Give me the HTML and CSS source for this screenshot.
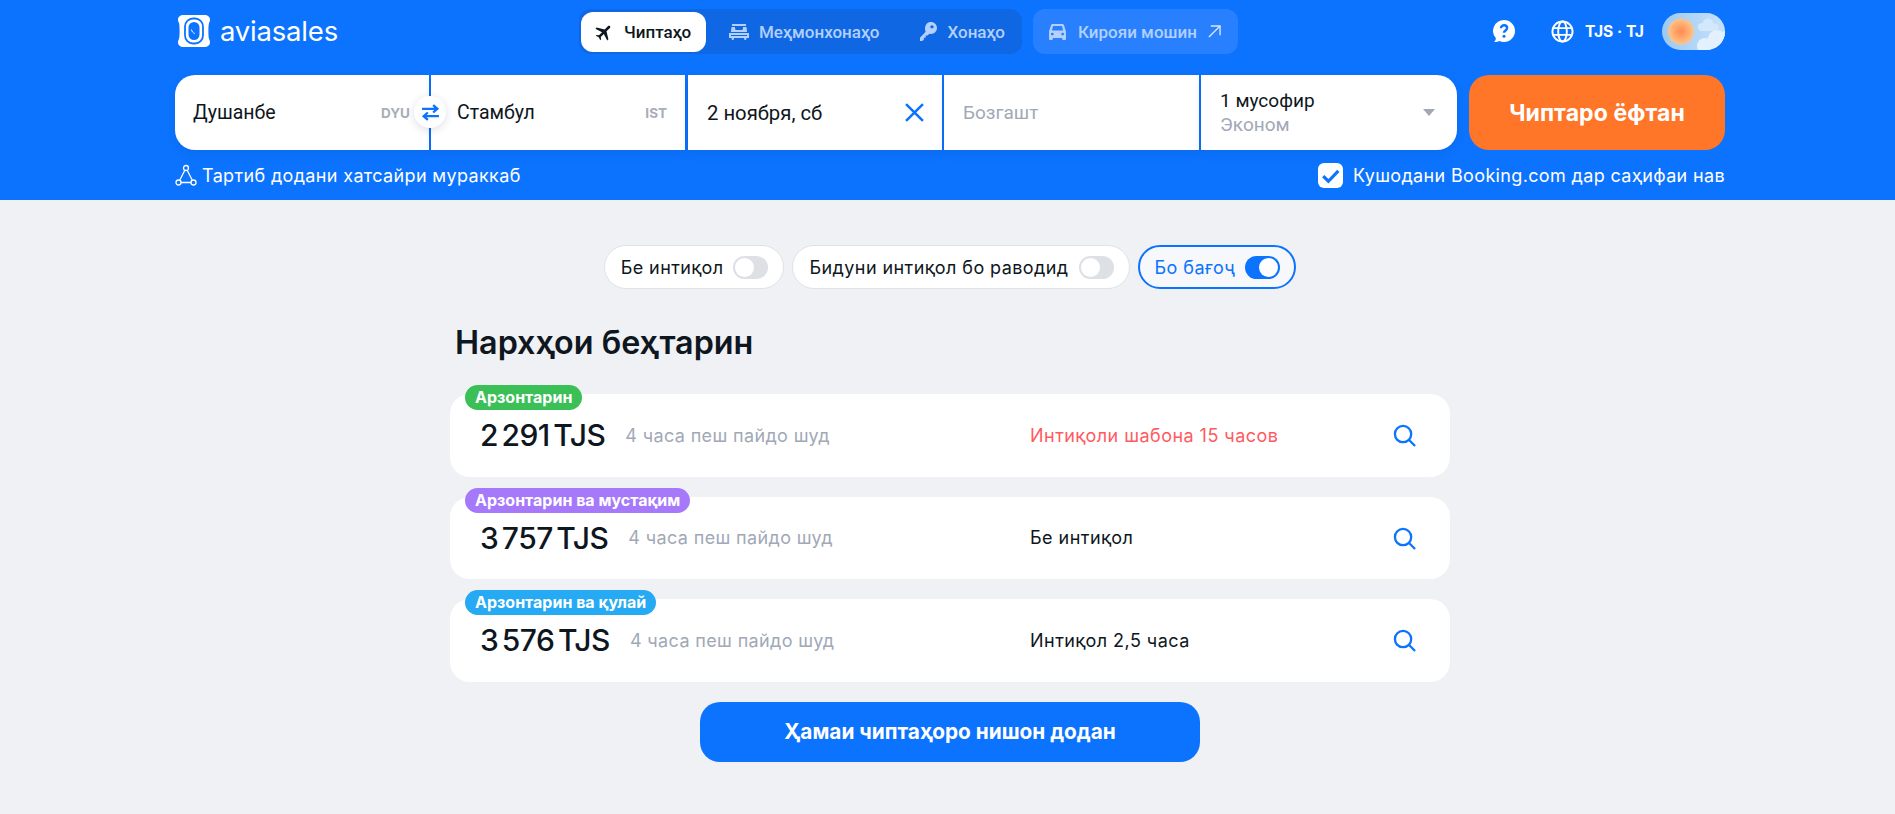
FILE: index.html
```html
<!DOCTYPE html>
<html lang="tg">
<head>
<meta charset="utf-8">
<title>Aviasales</title>
<link rel="stylesheet" href="styles.css">
</head>
<body>
<header class="header">
  <div class="top">
    <a class="logo">
      <svg class="logo-mark" viewBox="0 0 34 34" width="34" height="34">
        <path fill="#fff" d="M6 1h22c2.800 0 5 2.200 5 4.500 0 1.500-.4 2.300-.8 3C31.600 10 31.400 13 31.400 17s.2 7 .8 8.500c.4.700.8 1.500.8 3 0 2.300-2.200 4.500-5 4.500H6c-2.800 0-5-2.200-5-4.500 0-1.500.4-2.300.8-3C2.400 24 2.600 21 2.600 17s-.2-7-.8-8.500C1.400 7.800 1 7 1 5.500 1 3.200 3.200 1 6 1z"/>
        <rect x="8" y="4.500" width="18" height="25" rx="8" fill="none" stroke="#0c73fe" stroke-width="1.800"/>
        <rect x="11.500" y="8" width="11" height="18" rx="5.500" fill="#0c73fe"/>
        <path d="M14.500 15.500c.3 2 1.500 3.300 3.200 4" fill="none" stroke="#fff" stroke-width="1"/>
      </svg>
      <span class="logo-text">aviasales</span>
    </a>
    <nav class="segment">
      <a class="tab tab-active">
        <svg class="ic-plane" viewBox="0 0 24 24"><path transform="rotate(45 12 12)" fill="#0e1620" d="M22 16.500v-2l-8.500-5.200V3.500c0-.9-.7-1.600-1.500-1.600s-1.500.7-1.500 1.600v5.800L2 14.500v2l8.500-2.700V19l-2.300 1.700V22l3.800-1 3.800 1v-1.300L13.500 19v-5.200z"/></svg>
        <span>Чиптаҳо</span>
      </a>
      <a class="tab tab-hotel">
        <svg class="ic-bed" viewBox="0 0 20 16"><path fill="#b3d0ff" d="M3 0h14v2H3zM2.500 3h3.300l.7 3h7l.7-3h3.300l.6 5H1.900zM0 9h20v5h-2.500l-.5 2h-1.500l-.5-2H5l-.5 2H3l-.5-2H0zm2 2v1h16v-1z"/></svg>
        <span>Меҳмонхонаҳо</span>
      </a>
      <a class="tab tab-home">
        <svg class="ic-key" viewBox="0 0 18 20"><path fill="#b3d0ff" d="M11.500 0C15 0 18 2.800 18 6.300s-3 6.300-6.500 6.300c-.6 0-1.200-.1-1.700-.2L8 14.300H6v2.200H4V19l-2 1H0v-3.500l6-6.300c-.5-.9-.7-2-.7-3C5.300 2.800 8 0 11.500 0zm1.200 3.300a1.800 1.800 0 1 0 0 3.600 1.800 1.800 0 0 0 0-3.600z"/></svg>
        <span>Хонаҳо</span>
      </a>
    </nav>
    <a class="car">
      <svg class="ic-car" viewBox="0 0 18 17"><path fill="#b3d0ff" d="M4 0h10c1 0 1.700.6 2 1.500L18 8v8c0 .6-.4 1-1 1h-2c-.6 0-1-.4-1-1v-1H4v1c0 .6-.4 1-1 1H1c-.6 0-1-.4-1-1V8l2-6.500C2.300.6 3 0 4 0zm.3 2L3 7h12l-1.300-5zM3.500 9.200a1.500 1.500 0 1 0 0 3 1.500 1.500 0 0 0 0-3zm11 0a1.500 1.500 0 1 0 0 3 1.500 1.500 0 0 0 0-3z"/></svg>
      <span>Кирояи мошин</span>
      <svg class="ic-out" viewBox="0 0 14 14"><path d="M1 13 13 1M3 1h10v10" fill="none" stroke="#d6e6ff" stroke-width="1.500"/></svg>
    </a>
    <div class="tools">
      <svg class="ic-help" viewBox="0 0 22 22"><path fill="#fff" d="M11 0a11 11 0 0 1 0 22c-1.700 0-3.300-.4-4.700-1.100-1.300.9-3.300 1.200-5.300 1.100 1.200-1 1.800-2.200 1.900-3.700A11 11 0 0 1 11 0z"/><path d="M8 8.300c0-1.900 1.400-3 3.100-3s3 1.100 3 2.800c0 2.400-3.100 2.400-3.100 4.700" fill="none" stroke="#0c73fe" stroke-width="2.400"/><circle cx="11" cy="16.300" r="1.500" fill="#0c73fe"/></svg>
      <svg class="ic-globe" viewBox="0 0 24 24"><g fill="none" stroke="#fff" stroke-width="2"><circle cx="12" cy="12" r="10.500"/><ellipse cx="12" cy="12" rx="4.500" ry="10.500"/><path d="M2 8.500h20M2 15.500h20"/></g></svg>
      <span class="locale">TJS · TJ</span>
      <svg class="theme" viewBox="0 0 63 37">
        <defs>
          <clipPath id="themeclip"><rect width="63" height="37" rx="18.500"/></clipPath>
          <linearGradient id="sky" x1="0" x2="1" y1="0" y2="0"><stop offset="0" stop-color="#9cc9f2"/><stop offset="1" stop-color="#c6e2fb"/></linearGradient>
          <radialGradient id="sun"><stop offset="0" stop-color="#ff8a4f"/><stop offset="1" stop-color="#fdc58b"/></radialGradient>
        </defs>
        <g clip-path="url(#themeclip)">
          <rect width="63" height="37" fill="url(#sky)"/>
          <g fill="#d3e8fb"><circle cx="40" cy="14" r="4"/><circle cx="46" cy="11" r="5.500"/><circle cx="53" cy="14" r="3.500"/><rect x="38" y="13" width="17" height="5" rx="2.500"/></g>
          <g fill="#e3f1fe"><circle cx="43" cy="33" r="8"/><circle cx="55" cy="26" r="9"/><circle cx="64" cy="25" r="7"/><rect x="38" y="30" width="28" height="10"/></g>
          <circle cx="19" cy="18.500" r="13" fill="url(#sun)"/>
        </g>
      </svg>
    </div>
  </div>

  <form class="search">
    <div class="form">
      <div class="field field-origin"><span class="value value-city">Душанбе</span><span class="iata">DYU</span></div>
      <div class="field field-dest"><span class="value value-city">Стамбул</span><span class="iata">IST</span></div>
      <div class="field field-date"><span class="value value-date">2 ноября, сб</span>
        <svg class="ic-x" viewBox="0 0 18 18"><path d="M1 1l16 16M17 1 1 17" fill="none" stroke="#0c73fe" stroke-width="2.400"/></svg>
      </div>
      <div class="field field-back"><span class="value muted">Бозгашт</span></div>
      <div class="field field-pass">
        <div class="pass"><span class="value">1 мусофир</span><span class="value muted">Эконом</span></div>
        <span class="caret"></span>
      </div>
      <button type="button" class="swap">
        <svg viewBox="0 0 18 16" width="19" height="17"><path d="M1 4.500h14M11.500 1 15.500 4.500 11.500 8M17 11.500H3M6.500 8l-4 3.500 4 3.500" fill="none" stroke="#0c73fe" stroke-width="2.200"/></svg>
      </button>
    </div>
    <button type="button" class="find">Чиптаро ёфтан</button>
  </form>

  <div class="under">
    <a class="complex">
      <svg class="ic-route" viewBox="0 0 22 22"><g fill="none" stroke="#fff" stroke-width="1.300"><circle cx="11" cy="4" r="2.500"/><circle cx="3.500" cy="18.500" r="2.500"/><circle cx="18.500" cy="18.500" r="2.500"/><path d="M9.800 6.200 4.700 16.300M12.200 6.200l5.100 10.100M6 18.500h10"/></g></svg>
      <span>Тартиб додани хатсайри мураккаб</span>
    </a>
    <label class="booking">
      <span class="check"><svg viewBox="0 0 24 24" width="25" height="25"><path d="M5 12.500l5 5L19.500 7.500" fill="none" stroke="#0c73fe" stroke-width="3"/></svg></span>
      <span>Кушодани Booking.com дар саҳифаи нав</span>
    </label>
  </div>
</header>

<main class="main">
  <div class="filters">
    <div class="pill"><span>Бе интиқол</span><span class="toggle"></span></div>
    <div class="pill"><span>Бидуни интиқол бо раводид</span><span class="toggle"></span></div>
    <div class="pill pill-on"><span>Бо бағоҷ</span><span class="toggle toggle-on"></span></div>
  </div>
  <h1 class="title">Нархҳои беҳтарин</h1>
  <div class="cards">
    <article class="card">
      <span class="tag tag-green">Арзонтарин</span>
      <div class="price-wrap"><span class="price">2 291 TJS</span><span class="age">4 часа пеш пайдо шуд</span></div>
      <span class="stops stops-red">Интиқоли шабона 15 часов</span>
      <svg class="ic-search" viewBox="0 0 24 24"><g fill="none" stroke="#0c73fe" stroke-width="2.400"><circle cx="10.500" cy="10.500" r="8.500"/><path d="m17 17 6 6"/></g></svg>
    </article>
    <article class="card">
      <span class="tag tag-purple">Арзонтарин ва мустақим</span>
      <div class="price-wrap"><span class="price">3 757 TJS</span><span class="age">4 часа пеш пайдо шуд</span></div>
      <span class="stops">Бе интиқол</span>
      <svg class="ic-search" viewBox="0 0 24 24"><g fill="none" stroke="#0c73fe" stroke-width="2.400"><circle cx="10.500" cy="10.500" r="8.500"/><path d="m17 17 6 6"/></g></svg>
    </article>
    <article class="card">
      <span class="tag tag-blue">Арзонтарин ва қулай</span>
      <div class="price-wrap"><span class="price">3 576 TJS</span><span class="age">4 часа пеш пайдо шуд</span></div>
      <span class="stops">Интиқол 2,5 часа</span>
      <svg class="ic-search" viewBox="0 0 24 24"><g fill="none" stroke="#0c73fe" stroke-width="2.400"><circle cx="10.500" cy="10.500" r="8.500"/><path d="m17 17 6 6"/></g></svg>
    </article>
  </div>
  <button type="button" class="all">Ҳамаи чиптаҳоро нишон додан</button>
</main>
</body>
</html>
```

FILE: styles.css
```css
* { box-sizing: border-box; }
html, body { margin: 0; height: 100%; overflow: hidden; }
body { background: #eff1f5; font-family: Inter, "Noto Sans", sans-serif; color: #0e1620; }
button { font: inherit; border: 0; cursor: pointer; }

.header { height: 200px; background: #0c73fe; padding: 9px 170px 0 175px; color: #fff; }
.top { display: flex; align-items: center; height: 45px; }
.logo { display: flex; align-items: center; width: 404px; padding-left: 2px; margin-top: -2px; }
.logo-mark { flex: none; }
.logo-text { margin-left: 9px; font-size: 27.500px; font-weight: 400; letter-spacing: -.2px; line-height: 34px; }

.segment { display: flex; align-items: center; height: 45px; width: 443px; padding: 2px; background: #1067e4; border-radius: 12px; font-family: Roboto, sans-serif; font-weight: 500; font-size: 17px; color: #b3d0ff; }
.tab { display: flex; align-items: center; height: 40px; }
.tab-active { width: 125px; padding-left: 13px; background: #fff; border-radius: 12px; color: #0e1620; }
.tab-active span { margin-left: 10px; }
.tab-hotel { margin-left: 23px; }
.tab-hotel span { margin-left: 10px; }
.tab-home { margin-left: 41px; }
.tab-home span { margin-left: 10px; }
.ic-plane { width: 20px; height: 20px; }
.ic-bed { width: 20px; height: 16px; }
.ic-key { width: 17px; height: 19px; }
.car { display: flex; align-items: center; width: 205px; height: 45px; margin-left: 11px; padding-left: 16px; background: #2880ff; border-radius: 12px; font-family: Roboto, sans-serif; font-weight: 500; font-size: 17px; color: #b3d0ff; }
.car span { margin-left: 12px; }
.ic-car { width: 17px; height: 16px; }
.ic-out { width: 13px; height: 13px; margin-left: 11px; }

.tools { display: flex; align-items: center; margin-left: auto; }
.ic-help { width: 22px; height: 22px; margin-top: -1px; }
.ic-globe { width: 23px; height: 23px; margin-left: 36px; margin-top: -1px; }
.locale { margin-left: 11px; font-weight: 700; font-size: 15.600px; white-space: nowrap; margin-top: -1px; }
.theme { width: 63px; height: 37px; margin-left: 18px; }

.search { display: flex; margin-top: 21px; }
.form { position: relative; display: flex; gap: 2px; width: 1282px; height: 75px; }
.field { display: flex; align-items: center; justify-content: space-between; height: 75px; background: #fff; font-family: Roboto, sans-serif; box-shadow: 0 4px 8px rgba(0, 60, 150, .12); }
.field-origin { width: 254px; padding: 0 19px 0 18px; border-radius: 20px 0 0 20px; }
.field-dest { width: 254px; padding: 0 18px 0 26px; }
.field-date { width: 254px; margin-left: 1px; padding: 0 18px 0 19px; }
.field-back { width: 255px; padding-left: 19px; }
.field-pass { flex: 1; padding: 0 22px 0 19px; border-radius: 0 20px 20px 0; }
.value { font-size: 19px; line-height: 24px; color: #0e1620; white-space: nowrap; }
.value-city { font-size: 19.500px; margin-top: 1px; }
.value-date { font-size: 20.300px; }
.muted { color: #a1a8b6; }
.iata { font-family: Inter, sans-serif; font-size: 13.500px; font-weight: 700; color: #a8adb8; }
.ic-x { width: 19px; height: 19px; }
.pass { display: flex; flex-direction: column; }
.caret { width: 0; height: 0; border: 6px solid transparent; border-top: 7px solid #a1a8b6; border-bottom: 0; }
.swap { position: absolute; left: 239px; top: 21px; display: flex; align-items: center; justify-content: center; width: 32px; height: 32px; padding: 0; border-radius: 50%; background: #fff; box-shadow: 0 2px 8px rgba(0, 30, 90, .14); }

.find { width: 256px; height: 75px; margin-left: 12px; background: #ff7629; color: #fff; border-radius: 20px; font-size: 23px; font-weight: 700; letter-spacing: .1px; }

.under { display: flex; align-items: center; justify-content: space-between; height: 50px; font-size: 18px; letter-spacing: .35px; }
.complex, .booking { display: flex; align-items: center; }
.ic-route { width: 22px; height: 22px; }
.complex span { margin-left: 5px; }
.check { display: flex; width: 25px; height: 25px; background: #fff; border-radius: 6px; align-items: center; justify-content: center; }
.booking > span:last-child { margin-left: 10px; }

.main { display: flex; flex-direction: column; width: 1000px; margin-left: 450px; }
.filters { display: flex; justify-content: center; gap: 8px; margin-top: 45px; }
.pill { display: flex; align-items: center; gap: 10px; height: 44px; padding: 0 15px 0 16px; background: #fff; border: 1px solid #dfe2e7; border-radius: 22px; font-size: 18px; letter-spacing: .42px; }
.pill-on { color: #0c73fe; border: 2px solid #0c73fe; background: #f6f8fc; padding: 0 14px 0 15px; }
.toggle { position: relative; width: 35px; height: 23px; background: #dde0e5; border-radius: 12px; }
.toggle::after { content: ""; position: absolute; left: 2px; top: 2px; width: 19px; height: 19px; background: #fff; border-radius: 50%; }
.toggle-on { background: #0c73fe; }
.toggle-on::after { left: 14px; }

.title { margin: 32px 0 0 5px; font-size: 32.300px; line-height: 44px; font-weight: 600; }
.cards { display: flex; flex-direction: column; gap: 20px; margin-top: 29px; }
.card { position: relative; display: flex; align-items: center; height: 82.500px; padding-left: 30px; background: #fff; border-radius: 20px; }
.tag { position: absolute; left: 15px; top: -9px; height: 25px; padding: 0 10px; border-radius: 13px; color: #fff; font-size: 16px; font-weight: 700; line-height: 25px; white-space: nowrap; }
.tag-green { background: #3bbf57; }
.tag-purple { background: #a679fb; }
.tag-blue { background: #25aaf3; }
.price-wrap { display: flex; align-items: center; width: 550px; }
.price { font-size: 30px; font-weight: 500; word-spacing: -4px; letter-spacing: -.5px; }
.age { margin-left: 20px; font-size: 18px; letter-spacing: .36px; color: #a1a8b6; }
.stops { font-size: 18px; letter-spacing: .46px; }
.stops-red { color: #ff5a5f; }
.ic-search { position: absolute; right: 34px; top: 30px; width: 23px; height: 23px; }

.all { align-self: center; width: 500px; height: 60px; margin-top: 20px; background: #0c73fe; color: #fff; border-radius: 20px; font-size: 20.800px; font-weight: 700; }
```
